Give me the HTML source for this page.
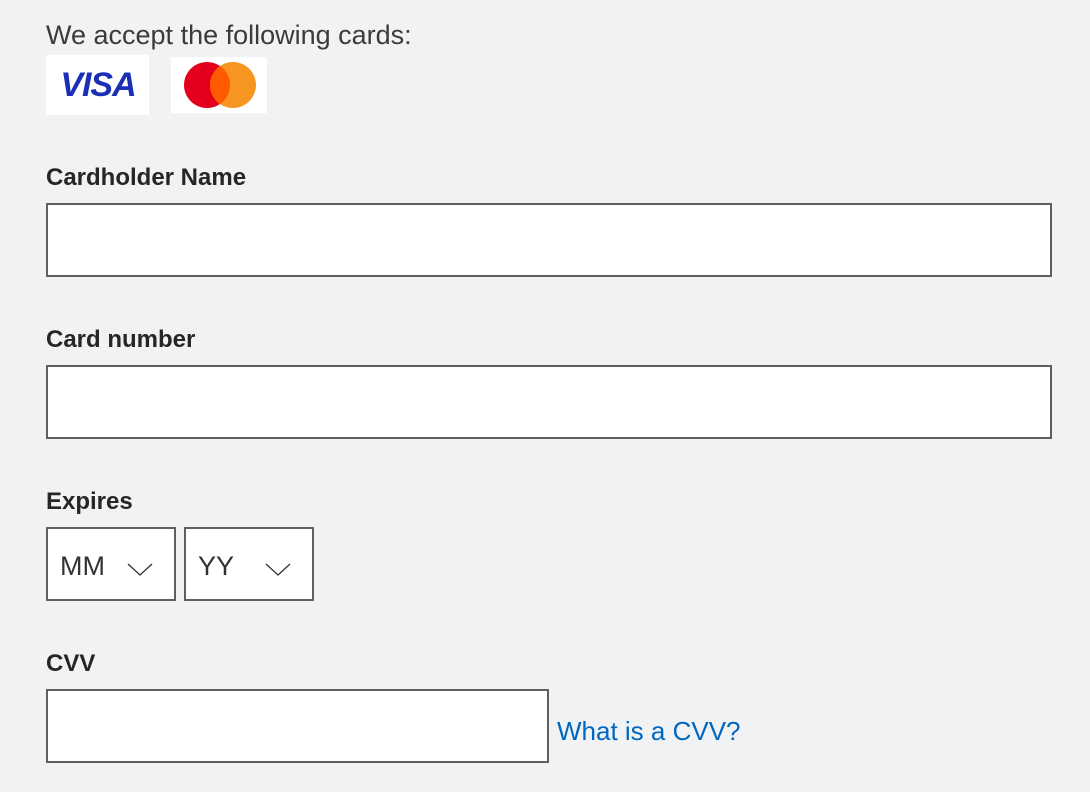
<!DOCTYPE html>
<html><head><style>
body{margin:0;background:#f1f2f4;font-family:"Liberation Sans",sans-serif;color:#262626;width:1090px;height:792px;overflow:hidden;position:relative}
.a{position:absolute}
.lbl{font-size:24px;font-weight:bold;color:#262626}
.box{position:absolute;background:#fff;border:2px solid #5f5f5f;box-sizing:border-box}
</style></head><body>
<div class="a" style="left:46px;top:20px;font-size:27px;color:#3b3b3b">We accept the following cards:</div>
<div class="a" style="left:46px;top:55px;width:103px;height:60px;background:#fff"></div>
<div class="a" style="left:52px;top:66px;width:92px;text-align:center;font-size:34px;font-weight:bold;font-style:italic;color:#1a2fb5;letter-spacing:-1px">VISA</div>
<div class="a" style="left:171px;top:57px;width:96px;height:56px;background:#fff"></div>
<svg class="a" style="left:171px;top:57px" width="96" height="56"><circle cx="36" cy="28" r="23" fill="#e4001c"/><circle cx="62" cy="28" r="23" fill="#f69520"/><path d="M49 9 A23 23 0 0 1 49 47 A23 23 0 0 1 49 9Z" fill="#ff5a00"/></svg>
<div class="a lbl" style="left:46px;top:164px">Cardholder Name</div>
<div class="box" style="left:46px;top:203px;width:1006px;height:74px"></div>
<div class="a lbl" style="left:46px;top:326px">Card number</div>
<div class="box" style="left:46px;top:365px;width:1006px;height:74px"></div>
<div class="a lbl" style="left:46px;top:488px">Expires</div>
<div class="box" style="left:46px;top:527px;width:130px;height:74px"></div>
<div class="a" style="left:60px;top:551px;font-size:27px;color:#333">MM</div>
<svg class="a" style="left:126px;top:561px" width="28" height="16"><path d="M2 3 L14 14 L26 3" fill="none" stroke="#333" stroke-width="1.3"/></svg>
<div class="box" style="left:184px;top:527px;width:130px;height:74px"></div>
<div class="a" style="left:198px;top:551px;font-size:27px;color:#333">YY</div>
<svg class="a" style="left:264px;top:561px" width="28" height="16"><path d="M2 3 L14 14 L26 3" fill="none" stroke="#333" stroke-width="1.3"/></svg>
<div class="a lbl" style="left:46px;top:650px">CVV</div>
<div class="box" style="left:46px;top:689px;width:503px;height:74px"></div>
<div class="a" style="left:557px;top:716px;font-size:26px;color:#0067c0">What is a CVV?</div>
</body></html>
